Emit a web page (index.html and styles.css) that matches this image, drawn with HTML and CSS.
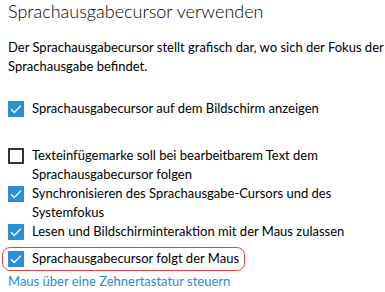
FILE: index.html
```html
<!DOCTYPE html>
<html lang="de">
<head>
  <meta charset="UTF-8">
  <meta name="viewport" content="width=device-width, initial-scale=1.0">
  <title>Sprachausgabecursor</title>
  <link rel="stylesheet" href="styles.css">
</head>
<body>
  <h1>Sprachausgabecursor verwenden</h1>
  <p class="desc">Der Sprachausgabecursor stellt grafisch dar, wo sich der Fokus der Sprachausgabe befindet.</p>

  <div class="check on first">
    <span class="box"><svg viewBox="0 0 16 16"><path d="M3 8.2 L6.3 11.5 L13 4.6"/></svg></span>
    <span class="label">Sprachausgabecursor auf dem Bildschirm anzeigen</span>
  </div>

  <div class="check off second">
    <span class="box"></span>
    <span class="label">Texteinfügemarke soll bei bearbeitbarem Text dem Sprachausgabecursor folgen</span>
  </div>
  <div class="check on">
    <span class="box"><svg viewBox="0 0 16 16"><path d="M3 8.2 L6.3 11.5 L13 4.6"/></svg></span>
    <span class="label">Synchronisieren des Sprachausgabe-Cursors und des Systemfokus</span>
  </div>
  <div class="check on">
    <span class="box"><svg viewBox="0 0 16 16"><path d="M3 8.2 L6.3 11.5 L13 4.6"/></svg></span>
    <span class="label">Lesen und Bildschirminteraktion mit der Maus zulassen</span>
  </div>
  <div class="check on marked">
    <span class="box"><svg viewBox="0 0 16 16"><path d="M3 8.2 L6.3 11.5 L13 4.6"/></svg></span>
    <span class="label">Sprachausgabecursor folgt der Maus</span>
  </div>

  <a class="link" href="#">Maus über eine Zehnertastatur steuern</a>
</body>
</html>
```

FILE: styles.css
```css
*{
  margin: 0; padding: 0;
  box-sizing: border-box;
}

body{
  font-family: Lato, "Noto Sans", sans-serif;
  font-size: 13px;
  color: #000;
  background: #fff;
  padding: 0 8px;
  width: 385px;
}

/* 제목 */
h1{
  font-weight: 300;
  font-size: 18px;
  line-height: 26px;
  margin-top: -2px;
}

.desc{
  line-height: 19px;
  margin-top: 14px;
  width: 377px;
}

/* 체크박스 */
.check{
  display: flex;
  align-items: flex-start;
  line-height: 19px;
}
.check.first{ margin-top: 23px; }
.check.second{ margin-top: 28px; }
.box{
  width: 16px; height: 16px;
  flex: none;
  margin: 2px 8px 0 0;
}
.check.on .box{
  background: #2b8fd8;
}
.check.off .box{
  border: 2px solid #333;
}
.box svg{
  display: block;
  width: 16px; height: 16px;
}
.box path{
  fill: none;
  stroke: #fff;
  stroke-width: 1.3;
}

.check.marked{
  position: relative;
  margin-top: 8px;
}
.check.marked::before{
  content: "";
  position: absolute;
  left: -6px; top: -2px;
  width: 241px; height: 22px;
  border: 1px solid #e8434b;
  border-radius: 8px;
}

.link{
  display: block;
  color: #2a8ad6;
  text-decoration: none;
  line-height: 19px;
  margin-top: 4px;
}
```
